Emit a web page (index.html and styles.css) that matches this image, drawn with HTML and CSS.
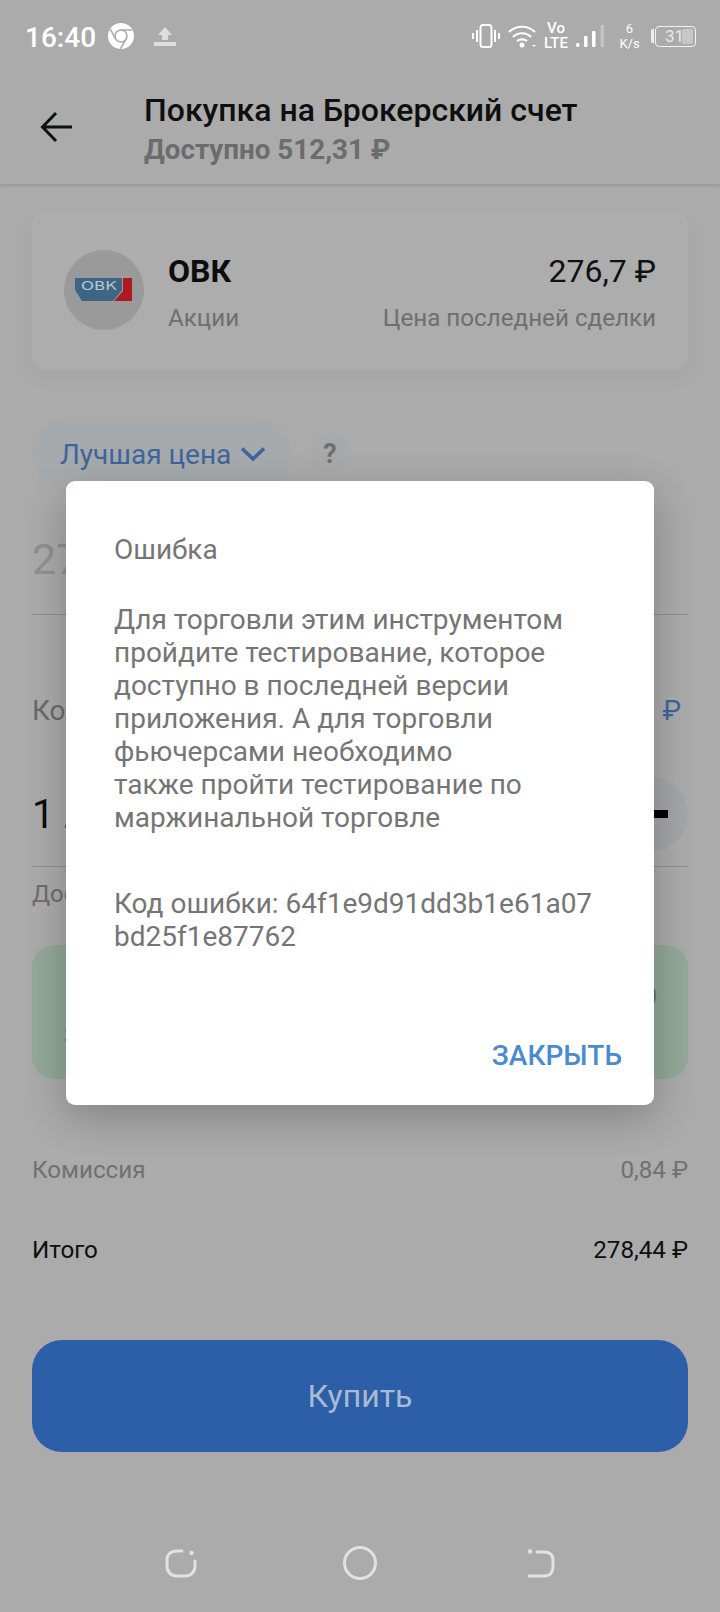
FILE: index.html
```html
<!DOCTYPE html>
<html lang="ru">
<head>
<meta charset="utf-8">
<title>Покупка</title>
<link rel="stylesheet" href="styles.css">
</head>
<body>
<div class="screen">
  <header class="top">
    <div class="statusbar">
      <div class="status-left">
        <span class="time">16:40</span>
        <svg class="ic-chrome" viewBox="0 0 26 26"><circle cx="13" cy="13" r="13" fill="#fff"/><circle cx="13" cy="13" r="6" fill="none" stroke="#ababab" stroke-width="1.6"/><path d="M13 7H24.4M7.8 16L2.2 6.2M18.2 16L12.4 25.8" stroke="#ababab" stroke-width="1.6" fill="none"/></svg>
        <svg class="ic-upload" viewBox="0 0 22 20"><path d="M11 1L18 9H14V14H8V9H4Z M0 16H22V20H0Z" fill="#dedede"/></svg>
      </div>
      <div class="status-right">
        <svg class="ic-vibrate" viewBox="0 0 28 24"><rect x="8.500" y="1" width="11" height="22" rx="2.500" fill="none" stroke="#fff" stroke-width="2"/><path d="M1 9V15M5 6V18M23 6V18M27 9V15" stroke="#fff" stroke-width="2"/></svg>
        <svg class="ic-wifi" viewBox="0 0 28 24"><path d="M1 8C8 1 20 1 27 8M5 13C10 8 18 8 23 13M9 17C12 15 16 15 19 17" fill="none" stroke="#fff" stroke-width="2.200"/><circle cx="14" cy="21" r="2.500" fill="#fff"/><path d="M24 21H28L26 23Z" fill="#fff"/></svg>
        <span class="volte">Vo<br>LTE</span>
        <svg class="ic-signal" viewBox="0 0 29 24"><rect x="0" y="19" width="3.500" height="4" rx="1.500" fill="#fff"/><rect x="8" y="12" width="3.500" height="11" rx="1" fill="#fff"/><rect x="16" y="7" width="3.500" height="16" rx="1" fill="#fff"/><rect x="24.500" y="1" width="3.500" height="22" rx="1" fill="#c4c4c4"/></svg>
        <span class="speed">6<br>K/s</span>
        <div class="battery-wrap">
          <span class="battery-cap"></span>
          <div class="battery"><span class="battery-fill"></span><span class="battery-text">31</span></div>
        </div>
      </div>
    </div>
    <div class="appbar">
      <svg class="ic-back" viewBox="0 0 34 32"><path d="M32 16H3M16 2L2.500 16L16 30" fill="none" stroke="#0e1116" stroke-width="3"/></svg>
      <div class="appbar-text">
        <div class="appbar-title">Покупка на Брокерский счет</div>
        <div class="appbar-sub">Доступно 512,31 ₽</div>
      </div>
    </div>
  </header>

  <main class="content">
    <section class="card">
      <div class="logo">
        <svg class="logo-mark" viewBox="0 0 58 24"><path d="M0 0H47V12L38 23H7L0 12Z" fill="#3f6585"/><path d="M48 0H57V23H39L48 13Z" fill="#ae1a1f"/><text x="6" y="12" class="logo-text" textLength="36" lengthAdjust="spacingAndGlyphs">ОВК</text></svg>
      </div>
      <div class="card-main">
        <div class="card-title">ОВК</div>
        <div class="card-note">Акции</div>
      </div>
      <div class="card-side">
        <div class="card-price">276,7 ₽</div>
        <div class="card-note">Цена последней сделки</div>
      </div>
    </section>

    <div class="order-row">
      <div class="pill">
        <span class="pill-text">Лучшая цена</span>
        <svg class="ic-chevron" viewBox="0 0 26 16"><path d="M2 2.500L13 13L24 2.500" fill="none" stroke="#3e659d" stroke-width="3.600"/></svg>
      </div>
      <div class="help">?</div>
    </div>

    <div class="price-field">276,7</div>

    <div class="qty-head">
      <span class="qty-label">Количество</span>
      <span class="qty-max">Цена 276,7 ₽</span>
    </div>
    <div class="qty-field">
      <span class="qty-value">1 лот</span>
      <div class="qty-minus"><span class="minus-bar"></span></div>
    </div>
    <div class="qty-hint">Доступно</div>

    <div class="notice">
      <span class="notice-left">Заявка</span>
      <span class="notice-right">0</span>
    </div>

    <div class="line-fee"><span>Комиссия</span><span>0,84 ₽</span></div>
    <div class="line-total"><span>Итого</span><span>278,44 ₽</span></div>

    <div class="buy">Купить</div>
  </main>

  <nav class="navbar">
    <svg class="ic-nav" viewBox="0 0 34 32"><path d="M18 4H13C7 4 3 7.500 3 13V19C3 25 7 29 13 29H21C27 29 31 25 31 19V14" fill="none" stroke="#e2e2e2" stroke-width="3" stroke-linecap="round"/><circle cx="27.500" cy="6" r="2.200" fill="#e2e2e2"/></svg>
    <svg class="ic-nav" viewBox="0 0 34 34"><circle cx="17" cy="17" r="15.500" fill="none" stroke="#e2e2e2" stroke-width="3"/></svg>
    <svg class="ic-nav" viewBox="0 0 34 32"><path d="M15 5H22C28 5 31 8 31 13V20C31 25 28 29 22 29H7" fill="none" stroke="#e2e2e2" stroke-width="3" stroke-linecap="round"/><circle cx="8" cy="4.500" r="2.200" fill="#e2e2e2"/></svg>
  </nav>

  <div class="modal">
    <div class="modal-title">Ошибка</div>
    <p class="modal-body">Для торговли этим инструментом<br>пройдите тестирование, которое<br>доступно в последней версии<br>приложения. А для торговли<br>фьючерсами необходимо<br>также пройти тестирование по<br>маржинальной торговле</p>
    <p class="modal-code">Код ошибки: 64f1e9d91dd3b1e61a07<br>bd25f1e87762</p>
    <div class="modal-actions"><span class="modal-close">ЗАКРЫТЬ</span></div>
  </div>
</div>
</body>
</html>
```

FILE: styles.css
```css
* { box-sizing: border-box; }
html, body { margin: 0; padding: 0; }
body { background: #ababab; font-family: Roboto, "Noto Sans", sans-serif; }

.screen {
  position: relative;
  width: 720px;
  height: 1612px;
  overflow: hidden;
  background: #ababab;
}

.top {
  height: 184px;
  background: #ababab;
  box-shadow: 0 1px 4px rgba(0, 0, 0, .16);
}

.statusbar {
  height: 72px;
  padding: 0 24px 0 25px;
  display: flex;
  justify-content: space-between;
  align-items: center;
  color: #fff;
}
.status-left, .status-right { display: flex; align-items: center; }
.time { font-size: 28px; font-weight: 500; line-height: 1; width: 83px; padding-top: 3px; }
.ic-chrome { width: 26px; height: 26px; }
.ic-upload { width: 22px; height: 20px; margin-left: 20px; }
.ic-vibrate { width: 28px; height: 24px; }
.ic-wifi { width: 28px; height: 24px; margin-left: 8px; }
.volte { font-size: 15px; font-weight: 500; line-height: 15px; text-align: center; margin-left: 7px; width: 26px; }
.ic-signal { width: 29px; height: 24px; margin-left: 7px; }
.speed { font-size: 13px; line-height: 15px; text-align: center; margin-left: 14px; width: 21px; }
.battery-wrap { display: flex; align-items: center; margin-left: 11px; }
.battery-cap { width: 3px; height: 14px; background: #eee; border-radius: 2px 0 0 2px; margin-right: 1px; }
.battery {
  position: relative;
  width: 41px;
  height: 21px;
  border: 1.500px solid #f2f2f2;
  border-radius: 4px;
  display: flex;
  align-items: center;
  padding-left: 9px;
}
.battery-text { position: relative; font-size: 17px; color: #e8e8e8; line-height: 1; }
.battery-fill { position: absolute; top: 2px; right: 2px; bottom: 2px; width: 11px; background: #c7c7c7; border-radius: 2px; }

.appbar { height: 112px; display: flex; align-items: flex-start; padding-left: 40px; }
.ic-back { width: 34px; height: 32px; margin-top: 39px; }
.appbar-text { margin-left: 70px; }
.appbar-title { font-size: 32px; font-weight: 500; line-height: 36px; color: #0f0f0f; margin-top: 20px; }
.appbar-sub { font-size: 27.800px; font-weight: 700; line-height: 36px; color: #6b6c6d; margin-top: 4px; }

.content { padding: 26px 32px 0; }

.card {
  height: 160px;
  background: #adadad;
  border-radius: 16px;
  display: flex;
  align-items: flex-start;
  padding: 40px 32px;
  box-shadow: 0 10px 22px rgba(0, 0, 0, .035);
}
.logo {
  width: 80px;
  height: 80px;
  border-radius: 50%;
  background: #9a9a9a;
  display: flex;
  align-items: center;
  justify-content: center;
  flex: none;
}
.logo-mark { width: 58px; height: 24px; }
.logo-text { font-family: "DejaVu Sans", sans-serif; font-size: 12.500px; fill: #b6c8d4; }
.card-main { margin-left: 24px; flex: 1; }
.card-title { font-size: 32px; font-weight: 700; line-height: 36px; color: #0d0d0d; margin-top: 3px; }
.card-note { font-size: 24.200px; line-height: 30px; color: #6f6f6f; margin-top: 14px; }
.card-side { text-align: right; }
.card-price { font-size: 32px; line-height: 36px; color: #111; margin-top: 3px; }

.order-row { display: flex; align-items: center; margin-top: 48px; height: 72px; }
.pill {
  width: 259px;
  height: 72px;
  border-radius: 36px;
  background: #a7aaac;
  display: flex;
  align-items: center;
  padding-left: 28px;
}
.pill-text { font-size: 28px; color: #3e659d; }
.ic-chevron { width: 26px; height: 16px; margin-left: 9px; }
.help {
  width: 40px;
  height: 40px;
  margin-left: 19px;
  border-radius: 50%;
  background: #a7a9aa;
  color: #6f6f6f;
  font-size: 27px;
  font-weight: 700;
  line-height: 40px;
  text-align: center;
}

.price-field {
  height: 125px;
  border-bottom: 1px solid #8e8e8e;
  color: #909090;
  font-size: 43px;
  line-height: 50px;
  padding-top: 44px;
}

.qty-head { display: flex; justify-content: space-between; margin-top: 80px; line-height: 32px; font-size: 28px; }
.qty-label { color: #6a6a6a; }
.qty-max { color: #3e659d; padding-right: 7px; word-spacing: 3px; }

.qty-field {
  height: 148px;
  margin-top: -8px;
  border-bottom: 1px solid #8e8e8e;
  display: flex;
  justify-content: space-between;
  align-items: flex-start;
  padding-top: 57px;
}
.qty-value { font-size: 40px; line-height: 50px; color: #0d0d0d; margin-top: 14px; }
.qty-minus {
  width: 76px;
  height: 76px;
  border-radius: 50%;
  background: #a4a5a6;
  display: flex;
  align-items: center;
  justify-content: center;
}
.minus-bar { width: 36px; height: 8px; background: #000; }

.qty-hint { font-size: 24px; line-height: 30px; color: #6d6d6d; margin-top: 12px; }

.notice {
  height: 134px;
  margin-top: 36px;
  background: #92a898;
  border-radius: 22px;
  display: flex;
  justify-content: space-between;
  padding: 0 31px 0 32px;
  color: #5f6f63;
  font-size: 24px;
  line-height: 30px;
}
.notice-left { align-self: flex-end; margin-bottom: 28px; }
.notice-right { align-self: flex-start; margin-top: 36px; }

.line-fee, .line-total { display: flex; justify-content: space-between; font-size: 24.200px; line-height: 30px; }
.line-fee { margin-top: 76px; color: #717171; }
.line-total { margin-top: 50px; color: #0f0f0f; }

.buy {
  height: 112px;
  margin-top: 75px;
  border-radius: 30px;
  background: #2d5fa8;
  color: #a9bad3;
  font-size: 32px;
  line-height: 112px;
  text-align: center;
}

.navbar {
  position: absolute;
  left: 164px;
  bottom: 32px;
  width: 392px;
  display: flex;
  justify-content: space-between;
  align-items: center;
}
.ic-nav { width: 34px; height: 34px; }

.modal {
  position: absolute;
  left: 66px;
  top: 481px;
  width: 588px;
  height: 624px;
  background: #fff;
  border-radius: 9px;
  padding: 52px 32px 0 48px;
  display: flex;
  flex-direction: column;
  box-shadow: 0 12px 40px rgba(0, 0, 0, .24);
  color: #757575;
  font-size: 28px;
  line-height: 33px;
}
.modal-title { line-height: 33px; }
.modal-body { margin: 37px 0 0; }
.modal-code { margin: 53px 0 0; }
.modal-actions { margin-top: auto; padding-bottom: 33px; display: flex; justify-content: flex-end; }
.modal-close { font-size: 28px; font-weight: 500; color: #4a8bd0; line-height: 33px; }
```
